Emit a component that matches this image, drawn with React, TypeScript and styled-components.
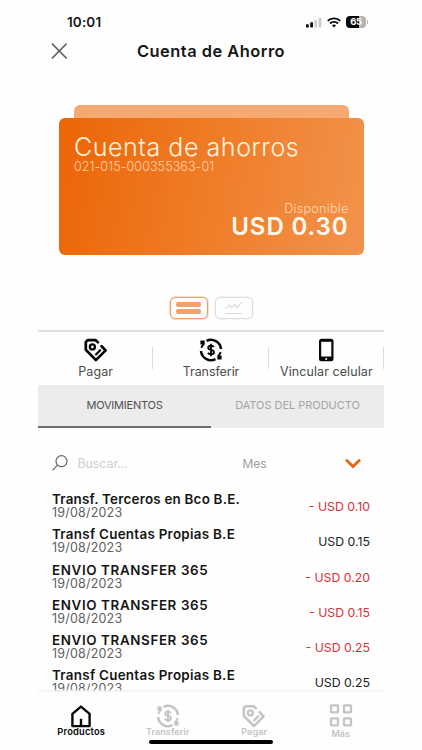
import React from "react";
import styled, { createGlobalStyle } from "styled-components";

const GlobalStyle = createGlobalStyle`
  * { box-sizing: border-box; }
  body { margin: 0; background: #fff; }
`;

const Page = styled.div`
  width: 422px;
  height: 750px;
  overflow: hidden;
  background: #fefefe;
  font-family: Inter, "Noto Sans", sans-serif;
  color: #161616;
`;

const Screen = styled.div`
  width: 346px;
  height: 750px;
  margin-left: 38px;
  display: flex;
  flex-direction: column;
`;

const StatusBar = styled.div`
  height: 35px;
  flex: none;
  padding: 10px 16px 0 29px;
  display: flex;
  align-items: flex-start;
  justify-content: space-between;
`;

const Clock = styled.span`
  font-size: 13.5px;
  line-height: 24px;
  font-weight: 600;
  letter-spacing: 0.15px;
`;

const StatusIcons = styled.div`
  display: flex;
  height: 24px;
  align-items: center;
  gap: 5px;
`;

const Battery = styled.div`
  width: 20px;
  height: 12px;
  border-radius: 4px;
  background: linear-gradient(90deg, #080808 65%, #b5b5b5 65%);
  color: #fff;
  font-size: 9.5px;
  line-height: 12px;
  font-weight: 700;
  letter-spacing: -0.3px;
  text-align: center;
`;

const BatteryGroup = styled.div`
  display: flex;
  align-items: center;
  gap: 1px;
  &::after {
    content: "";
    width: 1px;
    height: 4px;
    background: #bbb;
  }
`;

const Header = styled.header`
  height: 32px;
  flex: none;
  display: grid;
  grid-template-columns: 43px 260px 43px;
  align-items: center;
`;

const CloseIcon = styled.svg`
  justify-self: end;
`;

const Title = styled.h1`
  margin: 0 0 1px;
  text-align: center;
  font-size: 16.4px;
  line-height: 24px;
  font-weight: 600;
  letter-spacing: 0.5px;
  white-space: nowrap;
`;

const CardStack = styled.section`
  height: 150px;
  margin: 38px 20.5px 0;
  flex: none;
`;

const BackCard = styled.div`
  height: 13px;
  margin: 0 15px;
  border-radius: 6px 6px 0 0;
  background: #f7a972;
`;

const Card = styled.div`
  height: 137px;
  border-radius: 6px;
  background: linear-gradient(100deg, #ec6608 2%, #ef7d28 50%, #f29149 96%);
  padding: 15px 15px 0 15.5px;
  display: flex;
  flex-direction: column;
  color: #fff3df;
  white-space: nowrap;
`;

const CardName = styled.div`
  font-size: 25px;
  line-height: 29px;
  font-weight: 300;
  letter-spacing: 0.55px;
`;

const CardNumber = styled.div`
  font-size: 12.5px;
  line-height: 14px;
  margin-top: -2px;
  font-weight: 300;
  letter-spacing: 0.1px;
  color: #ffd4ad;
`;

const Available = styled.div`
  margin-top: 27px;
  text-align: right;
  font-size: 12.5px;
  line-height: 16px;
  font-weight: 300;
  letter-spacing: 0.3px;
  color: #ffdbb9;
`;

const Balance = styled.div`
  text-align: right;
  font-size: 24px;
  line-height: 20px;
  font-weight: 600;
  letter-spacing: 0.9px;
  color: #fffaf0;
`;

const Toggles = styled.div`
  height: 22px;
  flex: none;
  margin-top: 42px;
  display: flex;
  justify-content: center;
  gap: 7px;
`;

const Toggle = styled.div<{ $on?: boolean }>`
  width: 38px;
  height: 22px;
  border-radius: 5px;
  border: 1.5px solid ${(p) => (p.$on ? "#ed9a63" : "#dedede")};
  box-shadow: 0 0 0 0.5px ${(p) => (p.$on ? "#f4bd98" : "#ebebeb")};
  display: flex;
  flex-direction: column;
  align-items: center;
  justify-content: center;
  gap: 2px;
`;

const ToggleBar = styled.i`
  width: 24.5px;
  height: 5px;
  border-radius: 2px;
  background: #f0a26c;
`;

const Actions = styled.div`
  height: 55px;
  flex: none;
  margin-top: 11px;
  border-top: 2px solid #dfdfdf;
  display: grid;
  grid-template-columns: repeat(3, 1fr);
`;

const Action = styled.div`
  padding-top: 6px;
  display: flex;
  flex-direction: column;
  align-items: center;
  color: #080808;
  background: linear-gradient(#dcdcdc, #dcdcdc) right 15px / 1px 22px no-repeat;
  white-space: nowrap;
`;

const ActionLabel = styled.span<{ $spacing: number }>`
  font-size: 12.5px;
  line-height: 16px;
  margin-top: 1.5px;
  color: #4b4b4b;
  letter-spacing: ${(p) => p.$spacing}px;
`;

const Tabs = styled.div`
  height: 43px;
  flex: none;
  background: #ececec;
  display: grid;
  grid-template-columns: 1fr 1fr;
`;

const Tab = styled.div<{ $active?: boolean }>`
  text-align: center;
  font-size: 11px;
  line-height: 40px;
  letter-spacing: ${(p) => (p.$active ? -0.22 : -0.03)}px;
  color: ${(p) => (p.$active ? "#505050" : "#a5a5a5")};
  border-bottom: ${(p) => (p.$active ? "2px solid #6d6d6d" : "none")};
`;

const Filters = styled.div`
  height: 63px;
  flex: none;
  padding: 7px 23px 0 14px;
  display: grid;
  grid-template-columns: 25.5px 165px 1fr 16px;
  align-items: center;
  font-size: 12.5px;
`;

const Placeholder = styled.span`
  color: #cfcfcf;
  letter-spacing: -0.1px;
`;

const Period = styled.span`
  color: #a0a0a0;
  font-size: 12px;
`;

const Movements = styled.div`
  flex: 1;
  min-height: 0;
  overflow: hidden;
  padding: 1px 14px 0;
`;

const Movement = styled.div`
  height: 35.25px;
  display: flex;
  justify-content: space-between;
  white-space: nowrap;
`;

const MovementName = styled.div<{ $spacing: number }>`
  font-size: 13.4px;
  line-height: 15px;
  font-weight: 600;
  letter-spacing: ${(p) => p.$spacing}px;
`;

const MovementDate = styled.div`
  font-size: 12.5px;
  line-height: 13px;
  margin-top: -1px;
  letter-spacing: 0.2px;
  color: #5f5f5f;
`;

const Amount = styled.div<{ $debit: boolean }>`
  padding-top: 7px;
  font-size: 12.3px;
  line-height: 16px;
  color: ${(p) => (p.$debit ? "#d6333c" : "#222")};
`;

const BottomBar = styled.nav`
  height: 59px;
  flex: none;
  border-top: 1px solid #f5f5f5;
  box-shadow: 0 -1px 2px #f3f3f3;
  background: #fefefe;
  clip-path: inset(-4px 0 0 0);
`;

const NavItems = styled.div`
  height: 47.5px;
  display: grid;
  grid-template-columns: repeat(4, 1fr);
`;

const NavItem = styled.div<{ $active?: boolean }>`
  padding-top: 11.5px;
  display: flex;
  flex-direction: column;
  align-items: center;
  color: ${(p) => (p.$active ? "#080808" : "#c4c4c4")};
`;

const NavLabel = styled.span<{ $low?: boolean; $spacing?: number }>`
  font-size: ${(p) => (p.$spacing === 0.2 ? 9.3 : 9)}px;
  line-height: 10px;
  margin-top: ${(p) => (p.$low ? 1.5 : -0.5)}px;
  font-weight: 600;
  letter-spacing: ${(p) => p.$spacing ?? 0}px;
`;

const HomeIndicator = styled.div`
  width: 124px;
  height: 4.5px;
  border-radius: 3px;
  margin: 0 auto;
  background: #000;
`;

type IconProps = { weight?: number };

const TagIcon = ({ weight = 2.5 }: IconProps) => (
  <svg width="24" height="24" viewBox="0 0 24 24" fill="none" stroke="currentColor" strokeWidth={weight} strokeLinecap="round" strokeLinejoin="round">
    <path d="M13.9 4.4 11.7 2.2H3.6L1.8 4v7.8l10.1 10.3 9.7-9.7-4-4.2" />
    <circle cx="8.4" cy="8.9" r="2.5" strokeWidth="2.4" />
    <path d="m16.2 12.2-4.2 4.2" strokeWidth="2.1" />
  </svg>
);

const TransferIcon = ({ weight = 2.5 }: IconProps) => (
  <svg width="24" height="24" viewBox="0 0 24 24" fill="none" stroke="currentColor" strokeWidth={weight} strokeLinejoin="round">
    <path d="M7.5 2.9A10 10 0 0 1 22 11" />
    <path d="M16.5 21.1A10 10 0 0 1 2 13" />
    <path d="M1.4 2.5h4.3v4.1H1.4zM18.3 17.4h4.3v4.1h-4.3z" fill="currentColor" stroke="none" />
    <path d="m2.2 9.8 2.5-4M21.8 14.2l-2.5 4" strokeWidth="2" />
    <path d="M14.8 9c-.4-.9-1.5-1.3-2.8-1.3-1.7 0-2.8.8-2.8 2 0 3 5.8 1.5 5.8 4.5 0 1.4-1.3 2.1-3 2.1-1.5 0-2.5-.5-3.1-1.5M12 5.8v12.4" strokeWidth="1.9" />
  </svg>
);

const PhoneIcon = () => (
  <svg width="24" height="24" viewBox="0 0 24 24">
    <rect x="5" y=".7" width="14.5" height="22.6" rx="2.5" fill="#080808" />
    <rect x="7.2" y="3.8" width="10.1" height="14.7" fill="#fff" />
    <circle cx="12.2" cy="20.9" r="1" fill="#fff" />
  </svg>
);

const HomeIcon = () => (
  <svg width="24" height="24" viewBox="0 0 24 24" fill="none" stroke="currentColor" strokeWidth="2.4" strokeLinejoin="round">
    <path d="M3.4 22.1V9.8L12 2.6l8.6 7.2v12.3zM12 22v-7.3" />
  </svg>
);

const GridIcon = () => (
  <svg width="24" height="24" viewBox="0 0 24 24" fill="none" stroke="currentColor" strokeWidth="2.3">
    <rect x="2" y="1.3" width="7" height="7" rx=".5" />
    <rect x="15" y="1.3" width="7" height="7" rx=".5" />
    <rect x="2" y="14.3" width="7" height="7" rx=".5" />
    <rect x="15" y="14.3" width="7" height="7" rx=".5" />
  </svg>
);

const movements = [
  { name: "Transf. Terceros en Bco B.E.", amount: "- USD 0.10", spacing: 0.22 },
  { name: "Transf Cuentas Propias B.E", amount: "USD 0.15", spacing: 0.28 },
  { name: "ENVIO TRANSFER 365", amount: "- USD 0.20", spacing: 0.62 },
  { name: "ENVIO TRANSFER 365", amount: "- USD 0.15", spacing: 0.62 },
  { name: "ENVIO TRANSFER 365", amount: "- USD 0.25", spacing: 0.62 },
  { name: "Transf Cuentas Propias B.E", amount: "USD 0.25", spacing: 0.28 },
];

export default function App() {
  return (
    <Page>
      <GlobalStyle />
      <Screen>
        <StatusBar>
          <Clock>10:01</Clock>
          <StatusIcons>
            <svg width="16" height="11" viewBox="0 0 16 11">
              <rect x="0" y="7.2" width="2.8" height="3.3" rx=".8" fill="#080808" />
              <rect x="4.2" y="5.3" width="2.8" height="5.2" rx=".8" fill="#080808" />
              <rect x="8.4" y="3" width="2.8" height="7.5" rx=".8" fill="#ccc" />
              <rect x="12.6" y=".7" width="2.8" height="9.8" rx=".8" fill="#ccc" />
            </svg>
            <svg width="14" height="11" viewBox="0 0 14 11" fill="none" stroke="#080808" strokeWidth="1.9">
              <path d="M.7 3.9a9.2 9.2 0 0 1 12.6 0M3 6.5a5.8 5.8 0 0 1 8 0" />
              <path d="M4.9 8.3a3.2 3.2 0 0 1 4.2 0L7 10.5z" fill="#080808" stroke="none" />
            </svg>
            <BatteryGroup><Battery>65</Battery></BatteryGroup>
          </StatusIcons>
        </StatusBar>
        <Header>
          <CloseIcon width="30" height="16" viewBox="0 0 30 16" fill="none" stroke="#626262" strokeWidth="1.5">
            <path d="m1 .6 14.6 14.8M15.6.6 1 15.4" />
          </CloseIcon>
          <Title>Cuenta de Ahorro</Title>
        </Header>
        <CardStack>
          <BackCard />
          <Card>
            <CardName>Cuenta de ahorros</CardName>
            <CardNumber>021-015-000355363-01</CardNumber>
            <Available>Disponible</Available>
            <Balance>USD 0.30</Balance>
          </Card>
        </CardStack>
        <Toggles>
          <Toggle $on><ToggleBar /><ToggleBar /></Toggle>
          <Toggle>
            <svg width="18" height="14" viewBox="0 0 18 14" fill="none" stroke="#d9d9d9" strokeWidth="1.1">
              <path d="m.8 8 3-4 3 2.7 3-3 2 3.2L17 1M1 12.5h16" />
            </svg>
          </Toggle>
        </Toggles>
        <Actions>
          <Action><TagIcon weight={2.7} /><ActionLabel $spacing={0.1}>Pagar</ActionLabel></Action>
          <Action><TransferIcon /><ActionLabel $spacing={-0.08}>Transferir</ActionLabel></Action>
          <Action><PhoneIcon /><ActionLabel $spacing={0.08}>Vincular celular</ActionLabel></Action>
        </Actions>
        <Tabs>
          <Tab $active>MOVIMIENTOS</Tab>
          <Tab>DATOS DEL PRODUCTO</Tab>
        </Tabs>
        <Filters>
          <svg width="16" height="16" viewBox="0 0 16 16" fill="none" stroke="#636363" strokeWidth="1.2">
            <circle cx="9.5" cy="6.2" r="5.5" /><path d="M5.5 10.2.5 15.3" />
          </svg>
          <Placeholder>Buscar...</Placeholder>
          <Period>Mes</Period>
          <svg width="16" height="11" viewBox="0 0 16 11" fill="none" stroke="#e5641b" strokeWidth="2.8">
            <path d="m1 1.8 7 6.7 7-6.7" />
          </svg>
        </Filters>
        <Movements>
          {movements.map((m, i) => (
            <Movement key={i}>
              <div>
                <MovementName $spacing={m.spacing}>{m.name}</MovementName>
                <MovementDate>19/08/2023</MovementDate>
              </div>
              <Amount $debit={m.amount.startsWith("-")}>{m.amount}</Amount>
            </Movement>
          ))}
        </Movements>
        <BottomBar>
          <NavItems>
            <NavItem $active><HomeIcon /><NavLabel $spacing={0.2}>Productos</NavLabel></NavItem>
            <NavItem><TransferIcon /><NavLabel $spacing={0.1}>Transferir</NavLabel></NavItem>
            <NavItem><TagIcon /><NavLabel $spacing={0.15}>Pagar</NavLabel></NavItem>
            <NavItem><GridIcon /><NavLabel $low>Más</NavLabel></NavItem>
          </NavItems>
          <HomeIndicator />
        </BottomBar>
      </Screen>
    </Page>
  );
}
